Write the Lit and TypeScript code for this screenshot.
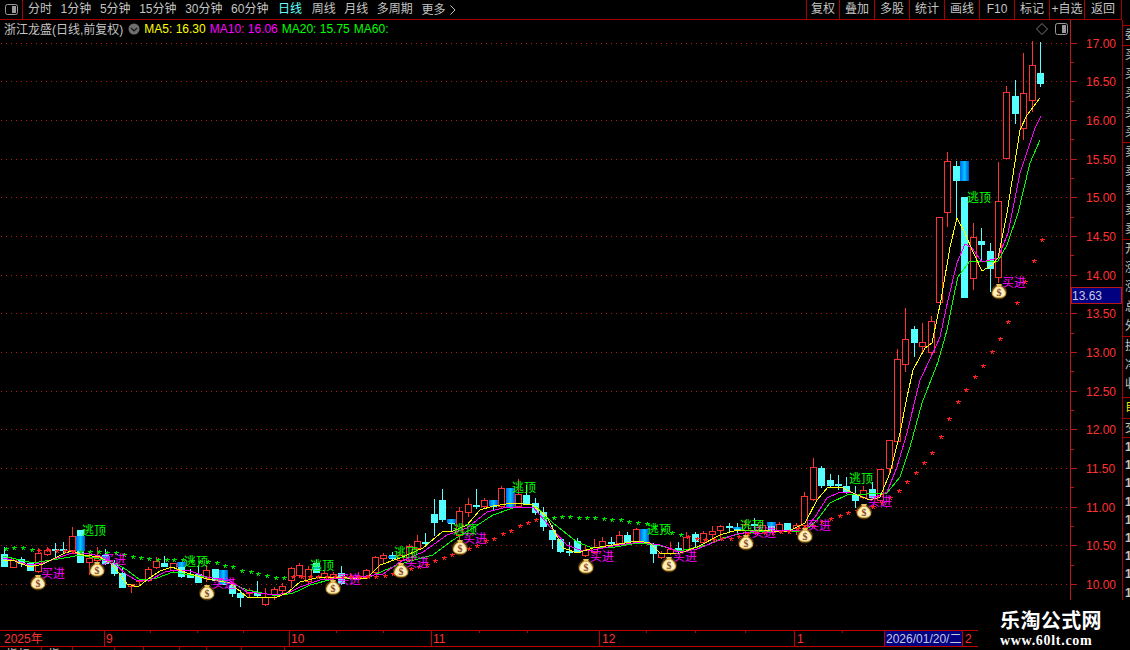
import { LitElement, css, html, svg } from 'lit';
import { customElement } from 'lit/decorators.js';

// price axis: 17.00 sits at y=42.5, one yuan is 77.36px
const priceY = (p: number) => Math.round(42.5 + (17 - p) * 77.36) + 0.5;
const candleX = (i: number) => Math.round(4.4 + 8.42 * i);

type Candle = [type: 'u' | 'd', high: number, top: number, bottom: number, low: number];

const CANDLES: Candle[] = [
  ['d', 547, 554, 566, 567], ['u', 558, 560, 567, 568], ['d', 557, 559, 563, 567], ['d', 562, 563, 570, 571],
  ['u', 548, 553, 571, 573], ['u', 547, 550, 554, 556], ['d', 543, 549, 549, 558], ['d', 542, 549, 549, 553],
  ['u', 527, 536, 550, 551], ['d', 530, 530, 562, 562], ['u', 552, 558, 562, 575], ['u', 547, 557, 560, 563],
  ['d', 549, 555, 563, 565], ['d', 560, 563, 573, 576], ['d', 567, 573, 587, 588], ['u', 584, 584, 586, 593],
  ['u', 579, 580, 581, 586], ['u', 567, 569, 580, 582], ['u', 557, 561, 567, 569], ['d', 556, 563, 566, 567],
  ['u', 563, 563, 570, 573], ['d', 562, 563, 576, 578], ['d', 569, 574, 577, 578], ['d', 565, 574, 582, 582],
  ['u', 565, 570, 578, 582], ['d', 569, 569, 580, 581], ['d', 570, 570, 584, 585], ['d', 582, 585, 593, 597],
  ['d', 590, 593, 597, 607], ['u', 588, 590, 593, 597], ['d', 581, 593, 595, 597], ['u', 588, 597, 604, 606],
  ['u', 587, 589, 594, 600], ['u', 583, 586, 590, 595], ['u', 567, 568, 580, 588], ['u', 563, 565, 575, 578],
  ['u', 566, 569, 581, 584], ['d', 560, 563, 572, 573], ['u', 571, 573, 577, 580], ['u', 572, 574, 578, 583],
  ['d', 566, 573, 583, 585], ['u', 573, 577, 577, 580], ['u', 572, 577, 578, 580], ['u', 569, 570, 577, 578],
  ['u', 556, 557, 572, 574], ['u', 553, 555, 558, 563], ['d', 552, 555, 558, 560], ['u', 553, 555, 560, 563],
  ['u', 544, 546, 560, 562], ['u', 535, 541, 548, 550], ['d', 533, 542, 542, 545], ['d', 499, 514, 522, 536],
  ['d', 489, 500, 519, 522], ['d', 519, 519, 523, 532], ['u', 507, 511, 535, 550], ['u', 498, 504, 512, 517],
  ['d', 489, 505, 505, 509], ['u', 498, 500, 506, 508], ['d', 500, 500, 506, 511], ['u', 486, 488, 506, 508],
  ['d', 488, 488, 507, 507], ['u', 479, 494, 506, 507], ['d', 485, 495, 503, 505], ['d', 498, 503, 512, 515],
  ['d', 507, 512, 526, 531], ['d', 525, 530, 539, 549], ['d', 538, 539, 551, 553], ['d', 542, 551, 551, 556],
  ['d', 538, 541, 552, 553], ['u', 545, 550, 555, 557], ['u', 539, 547, 552, 553], ['u', 537, 541, 547, 549],
  ['d', 537, 542, 542, 547], ['u', 531, 535, 543, 545], ['d', 532, 535, 542, 545], ['u', 528, 529, 541, 543],
  ['d', 529, 529, 543, 544], ['d', 543, 545, 553, 563], ['u', 551, 553, 557, 559], ['u', 542, 549, 553, 555],
  ['d', 542, 548, 548, 553], ['u', 532, 537, 549, 552], ['d', 532, 534, 541, 547], ['u', 531, 533, 542, 544],
  ['u', 526, 531, 534, 540], ['u', 525, 526, 530, 538], ['d', 523, 526, 526, 532], ['d', 523, 527, 529, 534],
  ['u', 520, 524, 530, 536], ['d', 518, 524, 524, 532], ['u', 520, 525, 530, 533], ['d', 522, 522, 530, 531],
  ['u', 522, 524, 530, 533], ['d', 523, 523, 530, 531], ['u', 523, 525, 528, 535], ['u', 492, 496, 525, 527],
  ['u', 458, 467, 499, 501], ['d', 466, 468, 485, 488], ['d', 474, 480, 485, 487], ['d', 475, 484, 484, 490],
  ['d', 477, 486, 492, 494], ['d', 486, 495, 500, 508], ['u', 486, 490, 497, 499], ['d', 482, 489, 497, 498],
  ['u', 469, 469, 500, 502], ['u', 440, 440, 468, 473], ['u', 349, 359, 441, 442], ['u', 308, 339, 364, 372],
  ['d', 326, 329, 342, 357], ['u', 323, 342, 346, 353], ['u', 316, 321, 352, 355], ['u', 217, 217, 302, 303],
  ['u', 152, 161, 212, 227], ['d', 161, 166, 180, 218], ['d', 197, 197, 297, 297], ['u', 223, 237, 278, 290],
  ['d', 228, 241, 244, 260], ['d', 243, 251, 268, 292], ['u', 162, 201, 277, 283], ['u', 86, 92, 158, 159],
  ['d', 80, 96, 113, 124], ['u', 53, 93, 128, 140], ['u', 41, 65, 100, 112], ['d', 42, 73, 83, 87],
];

// the blue gradient bars the formula paints over some candles: [candle, top, bottom]
const BLUE_BARS = [
  [9, 536, 551], [12, 556, 560], [21, 562, 567], [26, 570, 584], [37, 567, 569], [46, 556, 558], [53, 519, 523],
  [58, 500, 506], [60, 488, 507], [76, 529, 543], [87, 527, 529], [91, 522, 526], [114, 161, 181],
];

const MA5 = '3,560 12,560 20,563 30,567 43,564 55,558 65,553 72,551 83,555 100,557 113,565 127,584 138,587 148,579 160,571 172,567 187,573 207,579 230,583 247,597 277,597 287,593 300,582 320,577 347,578 367,578 380,565 400,558 423,548 442,532 453,531 467,525 480,510 493,506 513,503 533,505 547,517 563,548 577,553 593,548 613,545 637,541 650,543 660,553 680,553 697,547 720,535 737,530 757,530 787,532 805,523 817,500 828,487 843,488 857,495 870,500 880,497 890,473 900,433 907,397 913,370 925,348 932,343 941,300 950,247 957,218 965,233 973,252 982,271 992,265 998,258 1007,213 1020,130 1027,115 1040,98';
const MA10 = '3,558 12,560 30,565 43,563 60,557 72,553 85,553 100,556 113,562 127,575 138,581 150,580 165,572 175,570 190,571 207,577 230,581 247,592 277,595 290,592 300,587 320,580 357,577 383,574 400,562 423,552 447,535 467,528 487,512 507,507 533,507 550,527 567,545 580,550 593,550 613,546 640,542 660,545 680,552 697,549 720,540 737,534 757,531 787,530 805,530 815,517 827,498 840,492 853,493 870,500 887,492 897,467 907,433 920,380 932,355 940,337 948,300 957,263 965,244 972,248 982,262 998,258 1008,233 1020,173 1035,128 1041,116';
const MA20 = '3,556 20,560 33,563 70,557 80,555 113,562 127,570 140,580 157,578 173,572 190,575 213,578 233,584 247,590 277,596 293,593 300,590 310,585 333,579 367,578 390,568 410,561 433,555 453,540 473,528 493,515 513,508 537,507 553,523 577,542 590,547 610,548 637,543 657,545 680,551 707,545 723,538 743,533 767,531 793,532 805,531 817,520 830,503 847,495 867,494 887,493 900,477 910,447 922,403 938,362 947,330 955,290 958,277 963,270 970,261 998,261 1007,245 1018,213 1030,163 1040,140';

const GREEN_STARS = [
  [6, 549], [14, 548], [23, 548], [32, 550], [81, 552], [90, 552], [99, 552], [107, 553], [116, 553], [124, 555],
  [133, 557], [141, 558], [149, 559], [158, 560], [167, 560], [174, 560], [183, 560], [192, 561], [200, 562],
  [208, 562], [217, 563], [225, 566], [233, 567], [242, 571], [251, 572], [258, 574], [267, 576], [276, 578],
  [284, 578], [545, 518], [554, 518], [562, 517], [570, 517], [579, 518], [587, 518], [595, 518], [604, 519],
  [612, 520], [621, 520], [629, 522], [638, 523], [647, 524], [655, 527], [663, 530], [672, 533], [681, 535],
];
const RED_STARS = [
  [39, 551], [48, 550], [57, 551], [65, 551], [73, 552], [293, 577], [302, 577], [310, 577], [318, 577], [327, 577],
  [335, 577], [343, 577], [351, 577], [358, 577], [368, 577], [376, 577], [385, 576], [393, 574], [402, 572],
  [411, 569], [419, 567], [427, 565], [435, 561], [444, 558], [452, 555], [460, 552], [469, 549], [477, 546],
  [486, 541], [494, 539], [503, 534], [511, 531], [520, 526], [528, 523], [536, 520], [688, 537], [697, 539],
  [705, 540], [714, 540], [722, 539], [731, 539], [739, 537], [748, 534], [756, 533], [765, 533], [773, 533],
  [781, 532], [789, 532], [798, 529], [805, 528], [813, 526], [822, 522], [831, 519], [840, 516], [848, 513],
  [857, 511], [865, 509], [873, 507], [882, 503], [890, 498], [899, 491], [907, 482], [916, 473], [924, 463],
  [932, 453], [941, 437], [949, 419], [958, 402], [966, 390], [975, 377], [983, 366], [992, 352], [1000, 339],
  [1008, 322], [1017, 303], [1025, 282], [1034, 261], [1042, 240],
];

const SELL_LABELS = [[82, 530], [184, 561], [310, 565], [394, 552], [453, 529], [512, 487], [647, 529], [740, 525], [849, 478], [967, 197]];
const BUY_LABELS = [[41, 573], [102, 559], [212, 583], [337, 579], [405, 562], [463, 538], [590, 556], [673, 556], [752, 532], [807, 525], [868, 501], [1002, 282]];
const BAGS = [[38, 582], [97, 569], [207, 592], [333, 587], [401, 570], [460, 547], [586, 566], [669, 564], [746, 542], [805, 535], [864, 511], [999, 291]];

const PRICES = Array.from({ length: 15 }, (_, i) => 17 - i * 0.5);

const TABS = ['分时', '1分钟', '5分钟', '15分钟', '30分钟', '60分钟', '日线', '周线', '月线', '多周期'];
const RIGHT_BUTTONS = ['复权', '叠加', '多股', '统计', '画线', 'F10', '标记', '+自选', '返回'];
const SIDE_ROWS: { text: string[]; height: number; cls?: string }[] = [
  { text: ['委'], height: 20 },
  { text: ['买', '买', '买', '买', '买'], height: 97 },
  { text: ['卖', '卖', '卖', '卖', '卖'], height: 97 },
  { text: ['开', '涨', '涨', '总', '外'], height: 97 },
  { text: ['换', '净', '收'], height: 61 },
  { text: ['自'], height: 21, cls: 'yellow' },
  { text: ['交'], height: 19 },
  { text: Array(9).fill('1'), height: 163, cls: 'num' },
];
const BOTTOM_TABS = ['指标', '指', '', '', '', '', '', ''];
const BOTTOM_WIDTHS = [42, 31, 42, 29, 36, 27, 35, 43];

// small five-legged star, about 5px wide as the terminal draws it
const star = (x: number, y: number, cls: string) =>
  svg`<path class=${cls} d="M${x - 2} ${y - 0.5}H${x + 3}M${x + 0.5} ${y - 2}V${y}M${x - 1} ${y + 2}L${x + 0.5} ${y}L${x + 2} ${y + 2}"></path>`;

const bag = (x: number, y: number) => svg`
  <g transform="translate(${x} ${y})">
    <ellipse class="bag-glow" cx="0" cy="1" rx="8" ry="7.5"></ellipse>
    <path class="bag-neck" d="M-3 -7L3 -7L1.5 -4L-1.5 -4Z"></path>
    <path class="bag-body" d="M-2 -4.5H2C5 -2.5 6.5 0 6.5 2.5C6.5 5.5 3.5 6.5 0 6.5C-3.5 6.5 -6.5 5.5 -6.5 2.5C-6.5 0 -5 -2.5 -2 -4.5Z"></path>
    <text class="bag-sign" x="0" y="5">$</text>
  </g>`;

@customElement('app-root')
export class AppRoot extends LitElement {
  static styles = css`
    :host {
      display: block;
      position: relative;
      width: 1130px;
      height: 650px;
      overflow: hidden;
      background: #000;
      color: #c4c4c4;
      font: 12px 'Liberation Sans', 'Noto Sans CJK SC', sans-serif;
    }

    .toolbar {
      display: flex;
      align-items: stretch;
      height: 19px;
      width: 1122px;
      border-bottom: 1px solid #a80000;
      line-height: 18px;
    }
    .toggle {
      width: 23px;
      display: flex;
      align-items: center;
      justify-content: center;
      border-right: 1px solid #a80000;
      box-sizing: border-box;
      flex: none;
    }
    .tabs {
      display: flex;
      gap: 8.6px;
      padding-left: 5px;
      flex: 1;
    }
    .tabs .on {
      color: #66ffff;
      margin: 0 1px;
    }
    .more {
      display: flex;
      gap: 5px;
      align-items: center;
    }
    .buttons {
      display: flex;
    }
    .buttons span {
      width: 35px;
      box-sizing: border-box;
      text-align: center;
      border-left: 1px solid #a80000;
    }
    .buttons span:first-child {
      width: 33px;
    }
    .buttons span:last-child {
      width: 38px;
      border-right: 1px solid #a80000;
    }

    .body {
      display: flex;
      align-items: flex-start;
      height: 610px;
    }
    .plot {
      display: block;
      flex: none;
    }
    .side {
      width: 8px;
      padding-top: 5px;
      border-left: 1px solid #a80000;
      height: 575px;
      overflow: hidden;
      flex: none;
    }
    .side-row {
      box-sizing: border-box;
      border-top: 1px solid #a80000;
      padding-left: 2px;
      overflow: hidden;
      white-space: nowrap;
      line-height: 19.2px;
    }
    .side-row.yellow {
      color: #e8e800;
    }
    .side-row.num {
      font-weight: bold;
      line-height: 18.2px;
    }

    .title {
      position: absolute;
      left: 4px;
      top: 20px;
      display: flex;
      align-items: center;
      gap: 4px;
      height: 17px;
      white-space: nowrap;
    }
    .name {
      margin-right: 1px;
    }
    .ma5 { color: #ffff00; }
    .ma10 { color: #ff00ff; }
    .ma20 { color: #00ff00; }
    .corner {
      position: absolute;
      left: 1036px;
      top: 23px;
      display: flex;
      gap: 7px;
    }

    .time {
      display: block;
    }
    .bottom-tabs {
      display: flex;
      height: 3px;
      overflow: hidden;
      width: 978px;
    }
    .bottom-tabs span {
      box-sizing: border-box;
      border-right: 1px solid #a80000;
      padding-left: 6px;
      line-height: 16px;
      color: #c4c4c4;
    }

    .mark {
      position: absolute;
      right: 0;
      bottom: 0;
      width: 152px;
      height: 50px;
      box-sizing: border-box;
      padding: 9px 0 0 22px;
      background: #000;
      color: #fff;
      white-space: nowrap;
    }
    .mark b {
      display: block;
      font: bold 20px/22px 'Noto Sans CJK SC', sans-serif;
      letter-spacing: 0.4px;
    }
    .mark i {
      display: block;
      font: bold 14px/17px 'Liberation Serif', serif;
      margin-top: 1px;
      letter-spacing: 0.7px;
    }

    svg text { font-family: 'Liberation Sans', 'Noto Sans CJK SC', sans-serif; font-size: 12px; }
    .crisp { shape-rendering: crispEdges; }
    .grid { stroke: #b01c1c; stroke-dasharray: 1 4; fill: none; }
    .axis { stroke: #b81818; fill: none; }
    .price { fill: #ff3232; }
    .wick-u { stroke: #ff3232; }
    .wick-d { stroke: #54ffff; }
    .body-u { stroke: #ff3232; fill: #000; }
    .body-d { stroke: #54ffff; fill: #54ffff; }
    .line { fill: none; stroke-width: 1; }
    .l5 { stroke: #ffff00; }
    .l10 { stroke: #ff00ff; }
    .l20 { stroke: #00ff00; }
    .star-g { stroke: #00e000; fill: none; }
    .star-r { stroke: #ff2020; fill: none; }
    .sell { fill: #00ff00; }
    .buy { fill: #ff00ff; }
    .bag-glow { fill: #6b4a14; opacity: 0.75; }
    .bag-neck { fill: #e8c060; }
    .bag-body { fill: #fff0c0; stroke: #e0b040; stroke-width: 1; }
    svg .bag-sign { fill: #8a4a20; font: bold 10px 'Liberation Serif', serif; text-anchor: middle; }
    .last-box { fill: #000080; stroke: #b81818; }
    .last-text { fill: #c8c8e0; }
    .time-line { stroke: #c00000; }
    .time-label { fill: #ff3232; }
    .date-box { fill: #000080; stroke: #c00000; }
    .date-text { fill: #c8c8e0; }
  `;

  private renderPlot() {
    return html`<svg class="plot" width="1122" height="610" viewBox="0 20 1122 610">
      <defs>
        <linearGradient id="blue">
          <stop offset="0" stop-color="#0068f0"></stop>
          <stop offset="0.5" stop-color="#00c8ff"></stop>
          <stop offset="1" stop-color="#0050d8"></stop>
        </linearGradient>
      </defs>
      ${PRICES.map((p) => {
        const y = priceY(p);
        return svg`<line class="grid crisp" x1="1" x2="1070" y1=${y} y2=${y}></line>
          <line class="axis crisp" x1="1071" x2="1077" y1=${y} y2=${y}></line>
          <line class="axis crisp" x1="1071" x2="1074" y1=${priceY(p - 0.25)} y2=${priceY(p - 0.25)}></line>
          <text class="price" x="1086" y=${y + 4.5}>${p.toFixed(2)}</text>`;
      })}
      <line class="axis crisp" x1="1070.5" x2="1070.5" y1="20" y2="600"></line>
      ${CANDLES.map(([type, high, top, bottom, low], i) => {
        const x = candleX(i) + 0.5;
        return svg`<line class="wick-${type} crisp" x1=${x} x2=${x} y1=${high} y2=${low}></line>
          <rect class="body-${type} crisp" x=${x - 3} y=${top + 0.5} width="6" height=${Math.max(bottom - top, 1)}></rect>`;
      })}
      ${BLUE_BARS.map(([i, top, bottom]) => svg`<rect fill="url(#blue)" class="crisp" x=${candleX(i) - 4} y=${top} width="9" height=${bottom - top}></rect>`)}
      <polyline class="line l20 crisp" points=${MA20}></polyline>
      <polyline class="line l10 crisp" points=${MA10}></polyline>
      <polyline class="line l5 crisp" points=${MA5}></polyline>
      ${GREEN_STARS.map(([x, y]) => star(x, y, 'star-g crisp'))}
      ${RED_STARS.map(([x, y]) => star(x, y, 'star-r crisp'))}
      ${BUY_LABELS.map(([x, y]) => svg`<text class="buy" x=${x} y=${y + 5}>买进</text>`)}
      ${SELL_LABELS.map(([x, y]) => svg`<text class="sell" x=${x} y=${y + 5}>逃顶</text>`)}
      ${BAGS.map(([x, y]) => bag(x, y))}
      <rect class="last-box crisp" x="1071.5" y="287.5" width="50" height="16"></rect>
      <text class="last-text" x="1072" y="300">13.63</text>
    </svg>`;
  }

  private renderTimeAxis() {
    return html`<svg class="time" width="978" height="17" viewBox="0 630 978 17">
      <line class="time-line crisp" x1="0" x2="978" y1="630.5" y2="630.5"></line>
      <line class="time-line crisp" x1="0" x2="978" y1="646.5" y2="646.5"></line>
      ${[104.5, 289.5, 431.5, 599.5, 794.5].map((x) => svg`<line class="time-line crisp" x1=${x} x2=${x} y1="631" y2="646"></line>`)}
      ${[150.5, 197.5, 243.5, 336.5, 383.5, 479.5, 527.5, 646.5, 695.5, 745.5, 842.5].map((x) => svg`<line class="time-line crisp" x1=${x} x2=${x} y1="631" y2="633"></line>`)}
      <text class="time-label" x="4" y="643">2025年</text>
      <text class="time-label" x="106" y="643">9</text>
      <text class="time-label" x="291" y="643">10</text>
      <text class="time-label" x="433" y="643">11</text>
      <text class="time-label" x="602" y="643">12</text>
      <text class="time-label" x="797" y="643">1</text>
      <rect class="date-box crisp" x="884.5" y="630.5" width="78" height="16"></rect>
      <text class="date-text" x="886" y="643">2026/01/20/二</text>
      <text class="time-label" x="965" y="643">2</text>
    </svg>`;
  }

  render() {
    return html`
      <div class="toolbar">
        <div class="toggle">
          <svg width="13" height="11" viewBox="0 0 13 11">
            <rect x="0.5" y="0.5" width="12" height="10" rx="2" fill="none" stroke="#9a9a9a"></rect>
            <rect x="7" y="2" width="4" height="7" fill="#9a9a9a"></rect>
          </svg>
        </div>
        <div class="tabs">
          ${TABS.map((t) => html`<span class=${t === '日线' ? 'on' : ''}>${t}</span>`)}
          <span class="more">更多
            <svg width="6" height="10" viewBox="0 0 6 10"><path d="M0.5 0.5L5 5L0.5 9.5" fill="none" stroke="#c4c4c4"></path></svg>
          </span>
        </div>
        <div class="buttons">${RIGHT_BUTTONS.map((b) => html`<span>${b}</span>`)}</div>
      </div>

      <div class="body">
        ${this.renderPlot()}
        <div class="side">
          ${SIDE_ROWS.map((r) => html`<div class="side-row ${r.cls ?? ''}" style="height:${r.height}px">${r.text.map((t) => html`<div>${t}</div>`)}</div>`)}
        </div>
      </div>

      ${this.renderTimeAxis()}
      <div class="bottom-tabs">
        ${BOTTOM_TABS.map((t, i) => html`<span style="width:${BOTTOM_WIDTHS[i]}px">${t}</span>`)}
      </div>

      <div class="title">
        <span class="name">浙江龙盛(日线,前复权)</span>
        <svg width="12" height="12" viewBox="0 0 12 12">
          <circle cx="6" cy="6" r="5.5" fill="#6e6e6e"></circle>
          <path d="M3 5L6 8L9 5" fill="none" stroke="#161616" stroke-width="1.2"></path>
        </svg>
        <span class="ma5">MA5: 16.30</span>
        <span class="ma10">MA10: 16.06</span>
        <span class="ma20">MA20: 15.75</span>
        <span class="ma20">MA60:</span>
      </div>

      <div class="corner">
        <svg width="12" height="12" viewBox="0 0 12 12"><path d="M6 0.5L11.5 6L6 11.5L0.5 6Z" fill="none" stroke="#7a7a7a"></path></svg>
        <svg width="13" height="12" viewBox="0 0 13 12">
          <rect x="0.5" y="0.5" width="12" height="11" rx="2" fill="none" stroke="#9a9a9a"></rect>
          <rect x="7" y="2" width="4" height="8" fill="#9a9a9a"></rect>
        </svg>
      </div>

      <div class="mark">
        <b>乐淘公式网</b>
        <i>www.60lt.com</i>
      </div>
    `;
  }
}

declare global {
  interface HTMLElementTagNameMap {
    'app-root': AppRoot;
  }
}
